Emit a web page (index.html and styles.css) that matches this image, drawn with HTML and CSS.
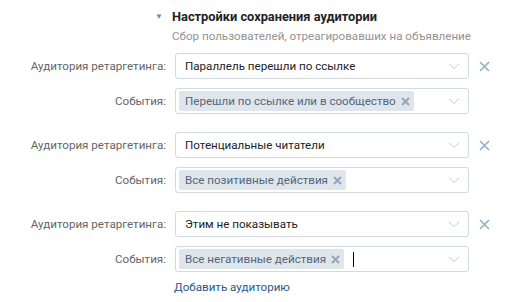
FILE: index.html
```html
<!DOCTYPE html>
<html lang="ru">
<head>
  <meta charset="UTF-8">
  <title>Настройки сохранения аудитории</title>
  <link rel="stylesheet" href="styles.css">
</head>
<body>
  <div class="settings">
    <div class="head">
      <span class="arrow">&#9660;</span>
      <div>
        <div class="title">Настройки сохранения аудитории</div>
        <div class="subtitle">Сбор пользователей, отреагировавших на объявление</div>
      </div>
    </div>

    <div class="group">
      <div class="row">
        <label>Аудитория ретаргетинга:</label>
        <div class="field"><span class="value">Параллель перешли по ссылке</span><svg class="chevron" width="12" height="7" viewBox="0 0 12 7"><path d="M1 1l5 4.5L11 1"/></svg></div>
        <svg class="remove" width="11" height="11" viewBox="0 0 11 11"><path d="M1 1l9 9M10 1L1 10"/></svg>
      </div>
      <div class="row">
        <label>События:</label>
        <div class="field"><span class="tag">Перешли по ссылке или в сообщество<svg width="9" height="9" viewBox="0 0 9 9"><path d="M1 1l7 7M8 1L1 8"/></svg></span><svg class="chevron" width="12" height="7" viewBox="0 0 12 7"><path d="M1 1l5 4.5L11 1"/></svg></div>
      </div>
    </div>

    <div class="group">
      <div class="row">
        <label>Аудитория ретаргетинга:</label>
        <div class="field"><span class="value">Потенциальные читатели</span><svg class="chevron" width="12" height="7" viewBox="0 0 12 7"><path d="M1 1l5 4.5L11 1"/></svg></div>
        <svg class="remove" width="11" height="11" viewBox="0 0 11 11"><path d="M1 1l9 9M10 1L1 10"/></svg>
      </div>
      <div class="row">
        <label>События:</label>
        <div class="field"><span class="tag">Все позитивные действия<svg width="9" height="9" viewBox="0 0 9 9"><path d="M1 1l7 7M8 1L1 8"/></svg></span><svg class="chevron" width="12" height="7" viewBox="0 0 12 7"><path d="M1 1l5 4.5L11 1"/></svg></div>
      </div>
    </div>

    <div class="group">
      <div class="row">
        <label>Аудитория ретаргетинга:</label>
        <div class="field"><span class="value">Этим не показывать</span><svg class="chevron" width="12" height="7" viewBox="0 0 12 7"><path d="M1 1l5 4.5L11 1"/></svg></div>
        <svg class="remove" width="11" height="11" viewBox="0 0 11 11"><path d="M1 1l9 9M10 1L1 10"/></svg>
      </div>
      <div class="row">
        <label>События:</label>
        <div class="field"><span class="tag">Все негативные действия<svg width="9" height="9" viewBox="0 0 9 9"><path d="M1 1l7 7M8 1L1 8"/></svg></span><span class="caret"></span><svg class="chevron" width="12" height="7" viewBox="0 0 12 7"><path d="M1 1l5 4.5L11 1"/></svg></div>
      </div>
    </div>

    <a class="add" href="#">Добавить аудиторию</a>
  </div>
</body>
</html>
```

FILE: styles.css
```css
body {
  margin: 0;
  padding: 0;
  background-color: #fff;
  font-family: Roboto, "Noto Sans", Arial, sans-serif;
  font-size: 11.6px;
  color: #000;
}

.settings {
  padding-top: 9px;
}

.head {
  display: flex;
  margin-left: 155px;
  margin-bottom: 9px;
}

.arrow {
  width: 17px;
  font-size: 8px;
  line-height: 16px;
  color: #828a99;
}

.title {
  font-weight: bold;
  font-size: 12.8px;
  line-height: 16px;
  color: #222;
}

.subtitle {
  margin-top: 3px;
  line-height: 16px;
  color: #939393;
}

.group {
  margin-bottom: 18px;
}

.row {
  display: grid;
  grid-template-columns: 166px 294px 30px;
  column-gap: 9px;
  align-items: center;
  margin-bottom: 9px;
}

.row label {
  text-align: right;
  color: #656565;
}

.field {
  display: flex;
  align-items: center;
  height: 26px;
  padding: 0 8px 0 3px;
  border: 1px solid #d3d9de;
  border-radius: 3px;
  box-sizing: border-box;
}

.value {
  padding-left: 6px;
  color: #222;
}

.tag {
  display: inline-flex;
  align-items: center;
  height: 20px;
  padding: 0 4px 0 6px;
  border-radius: 2px;
  background-color: #dee5eb;
  color: #55677d;
}

.tag svg {
  margin-left: 5px;
  stroke: #94a6b9;
  stroke-width: 2;
}

.caret {
  width: 1px;
  height: 15px;
  margin-left: 9px;
  background-color: #000;
}

.chevron {
  margin-left: auto;
  fill: none;
  stroke: #c5ced8;
  stroke-width: 1;
}

.remove {
  margin-left: 1px;
  stroke: #92afc9;
  stroke-width: 1.6;
}

.add {
  display: block;
  margin-left: 174px;
  margin-top: -10px;
  color: #2a5885;
  text-decoration: none;
}
```
